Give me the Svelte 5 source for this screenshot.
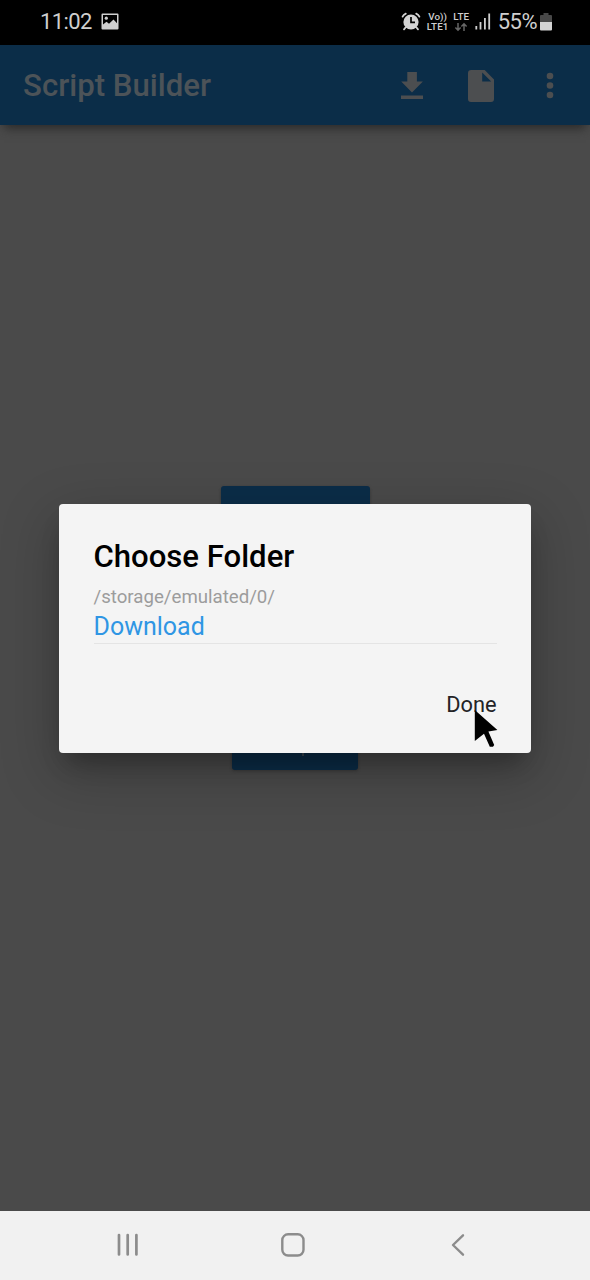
<script>
  const dots = [5, 14.5, 24];
</script>

<div class="screen">
  <header class="status">
    <div class="left">
      <span class="clock">11:02</span>
      <svg width="18" height="18" viewBox="0 0 18 18"><path fill-rule="evenodd" fill="#cfcfcf" d="M1.5 0.5h15q1 0 1 1v14q0 1-1 1h-15q-1 0-1-1v-14q0-1 1-1zM2 2v9.5l3.5-2.7 2.5 2 4.5-4.2 3.5 3.6V2z"/><circle cx="5.3" cy="5.2" r="1.6" fill="#cfcfcf"/></svg>
    </div>
    <div class="right">
      <svg class="alarm" width="20" height="20" viewBox="0 0 20 20"><g fill="none" stroke="#d3d3d3" stroke-width="1.8" stroke-linecap="round"><path d="M1.6 4.6Q2.6 2.6 4.8 1.6M15.2 1.6q2.2 1 3.2 3M4.5 15.5l-1.5 1.8M15.5 15.5l1.5 1.8"/></g><circle cx="10" cy="10" r="7.6" fill="#d3d3d3"/><path d="M10 5v5.3h4" fill="none" stroke="#000" stroke-width="1.7"/></svg>
      <div class="net volte"><span>Vo))</span><span>LTE1</span></div>
      <div class="net lte"><span>LTE</span>
        <svg width="14" height="10" viewBox="0 0 14 10"><path d="M4 1v7M1.4 5.5L4 8.2 6.6 5.5M10 9V2M7.4 4.5L10 1.8l2.6 2.7" fill="none" stroke="#666" stroke-width="1.5"/></svg>
      </div>
      <svg class="signal" width="16" height="17" viewBox="0 0 16 17" fill="#cfcfcf"><rect x="0.4" y="13" width="1.8" height="3.5"/><rect x="4.6" y="9" width="1.8" height="7.5"/><rect x="9" y="5" width="1.8" height="11.5"/><rect x="13.3" y="0.5" width="1.8" height="16"/></svg>
      <span class="percent">55%</span>
      <svg class="battery" width="12" height="18" viewBox="0 0 12 18"><path d="M3.5 0h5v2H11q1 0 1 1v6H0V3q0-1 1-1h2.5z" fill="#484848"/><path d="M0 9h12V16.5q0 1-1 1H1q-1 0-1-1z" fill="#d3d3d3"/></svg>
    </div>
  </header>

  <div class="appbar">
    <h1>Script Builder</h1>
    <svg class="download" width="24" height="28" viewBox="0 0 24 28" fill="#4c4e50"><path d="M7.3 0h9.6v9.6h6L12 20.6 1.2 9.6h6.1zM1 23.5h22V27H1z"/></svg>
    <svg class="file" width="26" height="32" viewBox="0 0 26 32" fill="#4c4e50"><path fill-rule="evenodd" d="M3.2 0h13.5L26 9.5V29q0 3-3 3H3q-3 0-3-3V3.2Q0 0 3.2 0zM14.2 2.4v9h9z"/></svg>
    <svg class="more" width="8" height="29" viewBox="0 0 8 29" fill="#4c4e50">{#each dots as y}<circle cx="4" cy={y} r="3.3"/>{/each}</svg>
  </div>

  <main>
    <div class="block wide"></div>
    <div class="block narrow"><i></i></div>
  </main>

  <section class="dialog">
    <h2>Choose Folder</h2>
    <p class="path">/storage/emulated/0/</p>
    <p class="folder">Download</p>
    <button>Done</button>
  </section>
  <svg class="pointer" width="25" height="38" viewBox="0 0 25 38"><path d="M.8 0L23.4 20l-9 1.4 5.8 13.6-1.2 1.8h-3.2L10 23.8.8 31z" fill="#000"/></svg>

  <nav>
    <svg width="22" height="24" viewBox="0 0 22 24"><path d="M2 2v19.5M10.7 2v19.5M19.4 2v19.5" stroke="#8c8c8c" stroke-width="2.7" stroke-linecap="round"/></svg>
    <svg class="home" width="24" height="24" viewBox="0 0 24 24"><rect x="1.3" y="1.3" width="21.2" height="21.2" rx="5.8" fill="none" stroke="#8c8c8c" stroke-width="2.4"/></svg>
    <svg class="back" width="14" height="24" viewBox="0 0 14 24"><path d="M12 2.3L2 12l10 9.7" fill="none" stroke="#8c8c8c" stroke-width="2.4" stroke-linecap="round" stroke-linejoin="round"/></svg>
  </nav>
</div>

<style>
  :global(body) { background: #4a4a4a; }
  .screen { position: relative; width: 590px; height: 1280px; display: flex; flex-direction: column; overflow: hidden; background: #4a4a4a; font-family: Roboto, sans-serif; }
  svg { display: block; flex: none; }
  h1, h2, p { margin: 0; white-space: nowrap; }
  .status { height: 45px; flex: none; box-sizing: border-box; background: #000; color: #cfcfcf; display: flex; justify-content: space-between; padding: 0 38.5px 2px 40px; }
  .left, .right { display: flex; align-items: center; }
  .clock { font-size: 22px; letter-spacing: -.6px; margin-right: 9.5px; line-height: 42px; padding-top: 1px; }
  .percent { font-size: 22px; letter-spacing: -.5px; margin: 0 2.5px 1px 7px; }
  .alarm { margin-right: 6px; }
  .net { display: flex; flex-direction: column; font-size: 9.8px; line-height: 10px; font-weight: 500; letter-spacing: .1px; align-items: center; }
  .volte { width: 22px; margin-right: 4px; }
  .lte { width: 17px; margin-right: 5px; }
  .appbar { position: relative; z-index: 1; height: 80px; flex: none; box-sizing: border-box; padding: 1px 36px 0 23px; display: flex; align-items: center; background: #0b2d48; box-shadow: 0 7px 10px -4px #282828; }
  h1 { font-size: 31.2px; line-height: 36px; font-weight: 500; color: #4c5358; margin-right: auto; }
  .download { margin-right: 44px; }
  .file { margin-right: 52px; }
  main { flex: 1; display: flex; flex-direction: column; justify-content: space-between; align-items: center; padding: 361px 0 441px; }
  .block { background: #0b2d48; border-radius: 3px; height: 64px; box-shadow: 0 1px 3px #383838; }
  .wide { width: 149px; }
  .narrow { width: 126px; display: flex; justify-content: center; align-items: flex-end; }
  .narrow i { width: 2px; height: 8px; margin: 0 0 14px 16px; background: #3d4952; }
  .dialog { position: absolute; z-index: 2; left: 59px; top: 503.5px; width: 472px; height: 249.5px; box-sizing: border-box; padding: 34.5px 34.5px 0; display: flex; flex-direction: column; border-radius: 4px; background: #f4f4f4; box-shadow: 0 16px 22px -8px rgba(0,0,0,.28), 0 18px 55px 4px rgba(0,0,0,.22); }
  h2 { font-size: 31.1px; line-height: 38px; font-weight: 500; color: #000; }
  .path { font-size: 18.65px; line-height: 24px; margin-top: 9px; color: #9c9c9c; }
  .folder { font-size: 25px; line-height: 31px; margin-top: 2px; padding-bottom: 1px; border-bottom: 1px solid #e4e4e4; color: #2f96e4; }
  button { align-self: flex-end; margin-top: 45px; padding: 0; border: 0; background: none; font: 21.8px/32px Roboto, sans-serif; color: #232326; }
  .pointer { position: absolute; z-index: 3; left: 474px; top: 710px; }
  nav { height: 69px; flex: none; box-sizing: border-box; padding: 0 125px 2px 117px; display: flex; align-items: center; background: #f1f1f1; }
  .home { margin-left: 142px; }
  .back { margin-left: auto; }
</style>
